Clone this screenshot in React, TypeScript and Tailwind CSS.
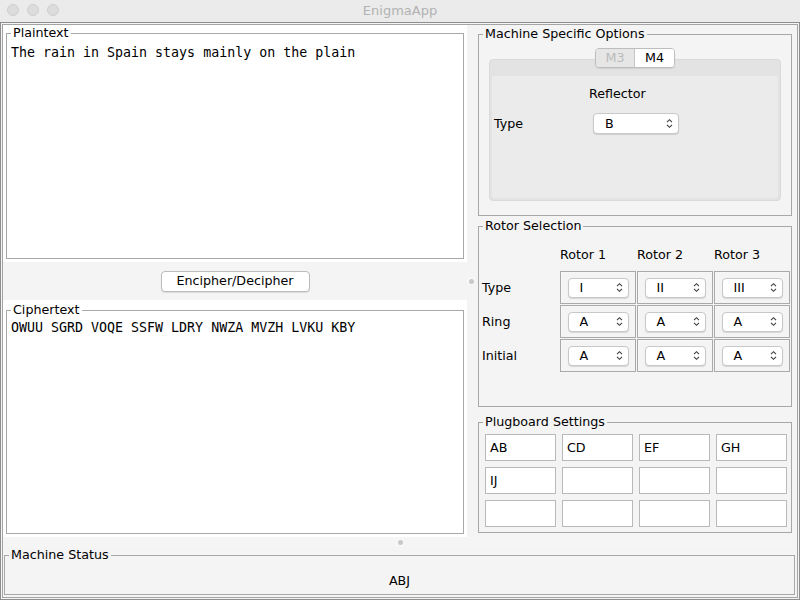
import React from 'react'

const ui = "font-['DejaVu_Sans',sans-serif] text-[12.7px] text-black"
const mono = "font-['DejaVu_Sans_Mono',monospace] text-[13.3px] leading-[17px] text-black"

const Group: React.FC<{ title: string; className?: string; children?: React.ReactNode }> = (props) => {
  const { title, className, children } = props
  return (
    <fieldset className={`min-w-0 border border-[#a8a8a8] ${className ?? ''}`}>
      <legend className="ml-[4px] px-[2px] leading-[16px]">{title}</legend>
      {children}
    </fieldset>
  )
}

const UpDown = () => (
  <svg width="7" height="11" viewBox="0 0 7 11" fill="none" stroke="#3c3c3c" strokeWidth="1.1">
    <path d="M1 4.2L3.5 1.7L6 4.2" />
    <path d="M1 6.8L3.5 9.3L6 6.8" />
  </svg>
)

const Combo: React.FC<{ value: string; className?: string }> = ({ value, className }) => (
  <div
    className={`flex h-[20px] items-center justify-between rounded-[4px] border border-[#c8c8c8] bg-white pl-[11px] pr-[5px] shadow-[0_1px_1px_rgba(0,0,0,0.12)] ${className ?? ''}`}
  >
    <span className="leading-[16px]">{value}</span>
    <UpDown />
  </div>
)

const Dot = () => (
  <div className="flex h-[8px] w-[8px] items-center justify-center bg-[#f7f7f7]">
    <div className="h-[5px] w-[5px] rounded-full bg-[#c9c9c9]" />
  </div>
)

const rotorRows = [
  { label: 'Type', values: ['I', 'II', 'III'] },
  { label: 'Ring', values: ['A', 'A', 'A'] },
  { label: 'Initial', values: ['A', 'A', 'A'] },
]

const plugs = ['AB', 'CD', 'EF', 'GH', 'IJ', '', '', '', '', '', '', '']

export default function App() {
  return (
    <div className={`flex h-[600px] w-[800px] flex-col bg-[#ececec] ${ui}`}>
      {/* title bar */}
      <div className="relative flex h-[22px] items-center justify-center bg-[#ebebeb]">
        <div className="absolute left-[7px] top-[4px] flex gap-[8px]">
          <div className="h-[12px] w-[12px] rounded-full border border-[#cfcfcf] bg-[#dcdcdc]" />
          <div className="h-[12px] w-[12px] rounded-full border border-[#cfcfcf] bg-[#dcdcdc]" />
          <div className="h-[12px] w-[12px] rounded-full border border-[#cfcfcf] bg-[#dcdcdc]" />
        </div>
        <span className="text-[13px] leading-[16px] text-[#b2b2b2]">EnigmaApp</span>
      </div>

      <div className="flex-1 border border-[#8e8e8e] bg-[#f4f4f4] p-[1px]">
        <div className="flex h-full flex-col border border-[#a4a4a4]">
          <div className="flex h-[512px]">
            {/* left column */}
            <div className="flex w-[464px] flex-col">
              <div className="flex h-[237px] flex-col bg-white px-[3px] pb-[3px]">
                <Group title="Plaintext" className="flex-1">
                  <div className={`pl-[4px] pt-[3px] ${mono}`}>The rain in Spain stays mainly on the plain</div>
                </Group>
              </div>
              <div className="flex h-[38px] items-center justify-center">
                <button className="h-[21px] w-[149px] rounded-[4px] border border-[#bcbcbc] bg-white leading-[16px] shadow-[0_1px_1px_rgba(0,0,0,0.1)]">
                  Encipher/Decipher
                </button>
              </div>
              <div className="flex h-[237px] flex-col bg-white px-[3px] pb-[3px] pt-[2px]">
                <Group title="Ciphertext" className="flex-1">
                  <div className={`pl-[4px] pt-[1px] ${mono}`}>OWUU SGRD VOQE SSFW LDRY NWZA MVZH LVKU KBY</div>
                </Group>
              </div>
            </div>

            <div className="flex w-[8px] items-center justify-center">
              <Dot />
            </div>

            {/* right column */}
            <div className="flex w-[322px] flex-col pl-[3px] pr-[5px] pt-[1px]">
              <Group title="Machine Specific Options" className="h-[190px]">
                <div className="flex flex-col items-center">
                  <div className="relative z-10 mt-[6px] flex h-[20px] overflow-hidden rounded-[4px] border border-[#bdbdbd] shadow-[0_1px_1px_rgba(0,0,0,0.08)]">
                    <div className="flex w-[39px] items-center justify-center border-r border-[#c4c4c4] bg-[#e6e6e6] text-[#bbbbbb]">
                      M3
                    </div>
                    <div className="flex w-[39px] items-center justify-center bg-white">M4</div>
                  </div>
                  <div className="-mt-[9px] h-[142px] w-[292px] rounded-[4px] border border-[#dadada] bg-[#e3e3e3] px-[2px] pb-[2px] pt-[16px]">
                    <div className="h-full rounded-[2px] bg-[#ebebeb]">
                      <div className="pl-[97px] pt-[10px] leading-[16px]">Reflector</div>
                      <div className="mt-[11px] flex items-center pl-[2px]">
                        <span className="w-[99px] leading-[16px]">Type</span>
                        <Combo value="B" className="h-[21px] w-[86px] pl-[9px]" />
                      </div>
                    </div>
                  </div>
                </div>
              </Group>

              <Group title="Rotor Selection" className="mt-[2px] h-[189px]">
                <div className="pl-[3px]">
                  <div className="mt-[13px] grid grid-cols-[77px_76px_76px_76px] gap-x-[1px] leading-[16px]">
                    <span />
                    <span>Rotor 1</span>
                    <span>Rotor 2</span>
                    <span>Rotor 3</span>
                  </div>
                  <div className="mt-[8px] grid grid-cols-[77px_76px_76px_76px] gap-x-[1px] gap-y-[1px]">
                    {rotorRows.map((r) => (
                      <React.Fragment key={r.label}>
                        <div className="flex h-[33px] items-center pt-[1px] leading-[16px]">{r.label}</div>
                        {r.values.map((v, i) => (
                          <div
                            key={i}
                            className="flex h-[33px] items-center justify-center border border-[#a9a9a9] shadow-[inset_1px_1px_0_#f7f7f7]"
                          >
                            <Combo value={v} className="w-[61px]" />
                          </div>
                        ))}
                      </React.Fragment>
                    ))}
                  </div>
                </div>
              </Group>

              <Group title="Plugboard Settings" className="mt-[7px] h-[119px]">
                <div className="mt-[4px] grid grid-cols-[71px_71px_71px_71px] gap-[6px] pl-[6px]">
                  {plugs.map((p, i) => (
                    <div
                      key={i}
                      className="flex h-[27px] items-center border border-[#b9b9b9] bg-white pl-[4px] leading-[16px]"
                    >
                      {p}
                    </div>
                  ))}
                </div>
              </Group>
            </div>
          </div>

          <div className="flex h-[10px] items-center justify-center bg-[#f5f5f5]">
            <Dot />
          </div>

          <div className="h-[50px] pl-[1px] pr-[2px]">
            <Group title="Machine Status" className="h-[48px]">
              <div className="flex h-[30px] items-center justify-center pt-[6px] leading-[16px]">ABJ</div>
            </Group>
          </div>
        </div>
      </div>
    </div>
  )
}
